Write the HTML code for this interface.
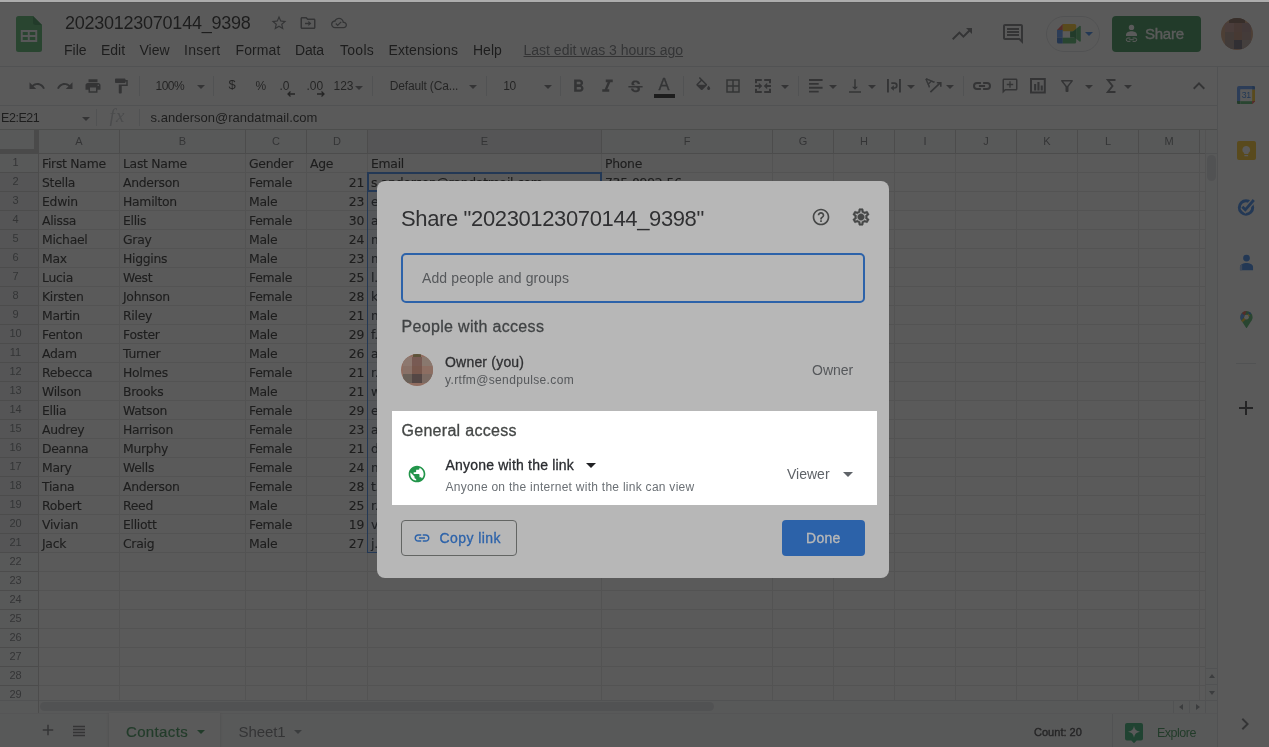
<!DOCTYPE html>
<html><head><meta charset="utf-8"><title>20230123070144_9398 - Google Sheets</title>
<style>
*{box-sizing:border-box;margin:0;padding:0}
html,body{width:1269px;height:747px;overflow:hidden;background:#fff}
body{position:relative;font-family:"Liberation Sans",sans-serif;color:#202124}
.abs{position:absolute}
svg{display:block}
/* ---------- app ---------- */
#app{position:absolute;left:0;top:0;width:1269px;height:747px}
#all{position:absolute;left:0;top:0;width:1269px;height:747px;will-change:transform}
#title{position:absolute;left:65px;top:12px;font-size:18px;line-height:22px;color:#000;letter-spacing:-0.25px;white-space:nowrap}
.menu{position:absolute;top:41px;font-size:14px;line-height:18px;color:#000;white-space:nowrap}
.ic{position:absolute;fill:#5f6368}
.hline{position:absolute;left:0;height:1px;background:#dadce0}
.tsep{position:absolute;top:76px;width:1px;height:20px;background:#dadce0}
.tt{position:absolute;top:78px;font-size:12px;line-height:16px;color:#222;white-space:nowrap}
.caret{position:absolute;width:0;height:0;border-left:4px solid transparent;border-right:4px solid transparent;border-top:4px solid #5f6368}
/* grid */
#grid{position:absolute;left:0;top:0;width:1218px;height:700px;overflow:hidden}
.ch{position:absolute;top:130px;height:23px;background:#f8f9fa;font-size:11px;line-height:23px;text-align:center;color:#5f6368}
.ch.sel{background:#e8eaed}
.rh{position:absolute;left:0;width:38px;height:18px;background:#f8f9fa;font-size:11px;line-height:16px;text-align:center;color:#5f6368;padding-right:7px}
.rh.sel{background:#e8eaed}
.vl{position:absolute;top:130px;width:1px;height:570px;background:#e1e1e1}
.hl{position:absolute;left:0;width:1205px;height:1px;background:#e1e1e1}
.c{position:absolute;height:18px;font-family:"DejaVu Sans","Liberation Sans",sans-serif;font-size:12.400px;line-height:20px;color:#000;padding:0 3px 0 3px;white-space:nowrap;overflow:hidden;letter-spacing:-0.28px;-webkit-text-stroke:.15px #000}
.c.num{text-align:right}
.c.lnk{color:#1155cc;text-decoration:underline}
/* overlays */
#scrim{position:absolute;left:0;top:0;width:1269px;height:747px;background:rgba(0,0,0,.6)}
#dlg{position:absolute;left:377px;top:181px;width:512px;height:397px;background:#fff;border-radius:8px}
#hl{position:absolute;left:392px;top:411px;width:485px;height:94px;box-shadow:0 0 0 2000px rgba(73,73,73,.396)}
#topstrip{position:absolute;left:0;top:0;width:1269px;height:2px;background:#adadad;box-shadow:0 1px 0 #555}
.d{position:absolute;white-space:nowrap}
.m{-webkit-text-stroke:.3px currentColor}
</style></head><body>
<div id="all">
<div id="app">
  <!-- header -->
  <svg class="abs" style="left:16px;top:16px" width="26" height="36" viewBox="0 0 26 36"><path d="M2.500 0H17l9 9v24.500a2.500 2.500 0 0 1-2.500 2.500h-21A2.500 2.500 0 0 1 0 33.500v-31A2.500 2.500 0 0 1 2.500 0z" fill="#34a853"/><path d="M17 0l9 9h-6.500A2.500 2.500 0 0 1 17 6.500z" fill="#188038"/><path d="M4.800 14v12h16.400V14H4.800zm7 10.100H6.700v-3.200h5.100zm0-5H6.700v-3.200h5.100zm7.500 5h-5.600v-3.200h5.600zm0-5h-5.600v-3.200h5.600z" fill="#f1f3f4"/></svg>
  <div id="title">20230123070144_9398</div>
  <svg class="ic" style="left:270px;top:14px" width="18" height="18" viewBox="0 0 24 24"><path d="M22 9.240l-7.190-.620L12 2 9.190 8.630 2 9.240l5.460 4.730L5.820 21 12 17.270 18.180 21l-1.630-7.030L22 9.240zM12 15.400l-3.760 2.270 1-4.280-3.320-2.880 4.380-.380L12 6.100l1.710 4.040 4.380.380-3.320 2.880 1 4.280L12 15.400z"/></svg>
  <svg class="ic" style="left:299px;top:14px" width="18" height="18" viewBox="0 0 24 24"><path d="M20 6h-8l-2-2H4c-1.100 0-2 .900-2 2v12c0 1.100.900 2 2 2h16c1.100 0 2-.900 2-2V8c0-1.100-.900-2-2-2zm0 12H4V6h5.170l2 2H20v10zm-7.500-2l4-3.500-4-3.500v2.500H8v2h4.500z"/></svg>
  <svg class="ic" style="left:331px;top:15px" width="16" height="16" viewBox="0 0 24 24"><path d="M19.350 10.040C18.670 6.590 15.640 4 12 4 9.110 4 6.600 5.640 5.350 8.040 2.340 8.360 0 10.910 0 14c0 3.310 2.690 6 6 6h13c2.760 0 5-2.240 5-5 0-2.640-2.050-4.780-4.650-4.960zM19 18H6c-2.210 0-4-1.790-4-4s1.790-4 4-4h.710C7.370 7.690 9.480 6 12 6c3.040 0 5.500 2.460 5.500 5.500v.500H19c1.660 0 3 1.340 3 3s-1.340 3-3 3zm-9-3.820l-2.090-2.090L6.500 13.500 10 17l6.010-6.010-1.410-1.410z"/></svg>
  <div class="menu" style="left:64px">File</div>
  <div class="menu" style="left:101px">Edit</div>
  <div class="menu" style="left:139.500px">View</div>
  <div class="menu" style="left:184px;letter-spacing:.25px">Insert</div>
  <div class="menu" style="left:235.500px;letter-spacing:.1px">Format</div>
  <div class="menu" style="left:295px;letter-spacing:-.2px">Data</div>
  <div class="menu" style="left:340px;letter-spacing:.28px">Tools</div>
  <div class="menu" style="left:388.500px;letter-spacing:.1px">Extensions</div>
  <div class="menu" style="left:473px">Help</div>
  <div class="menu" style="left:523.500px;color:#5f6368;text-decoration:underline">Last edit was 3 hours ago</div>
  <!-- header right -->
  <svg class="ic" style="left:950px;top:22px" width="24" height="24" viewBox="0 0 24 24"><path d="M16 6l2.290 2.290-4.880 4.880-4-4L2 16.590 3.410 18l6-6 4 4 6.300-6.290L22 12V6z"/></svg>
  <svg class="ic" style="left:1001px;top:22px" width="24" height="24" viewBox="0 0 24 24"><path d="M21.990 4c0-1.100-.890-2-1.990-2H4c-1.100 0-2 .900-2 2v12c0 1.100.900 2 2 2h14l4 4-.010-18zM20 4v13.170L18.830 16H4V4h16zM6 12h12v2H6zm0-3h12v2H6zm0-3h12v2H6z"/></svg>
  <div class="abs" style="left:1046px;top:16px;width:54px;height:36px;border:1px solid #dadce0;border-radius:18px"></div>
  <svg class="abs" style="left:1057px;top:24px" width="24" height="20" viewBox="0 0 24 20"><path d="M0 6L5.800 0v6z" fill="#ea4335"/><path d="M5.800 0h11.900a1.500 1.500 0 0 1 1.500 1.500v5.900H5.800z" fill="#fbbc04"/><path d="M0 6h5.800v7.400H0z" fill="#4285f4"/><path d="M0 13.400h5.800v6.100H1.500A1.500 1.500 0 0 1 0 18z" fill="#1967d2"/><path d="M5.800 13.400h13.400V18a1.500 1.500 0 0 1-1.500 1.500H5.800z" fill="#34a853"/><path d="M5.800 7.400h7.300v6H5.800z" fill="#fff"/><path d="M13.100 7.400h6.100v6h-6.100z" fill="#188038"/><path d="M13.100 9.800l6.100-5.100v10.200z" fill="#188038"/><path d="M19.200 4.700l3.300-2.700c.5-.4 1.300 0 1.300.600v14.300c0 .7-.8 1-1.300.600l-3.300-2.800z" fill="#34a853"/></svg>
  <div class="caret" style="left:1085px;top:32px;border-top-color:#1a73e8"></div>
  <div class="abs" style="left:1112px;top:16px;width:89px;height:36px;border-radius:4px;background:#188038"></div>
  <svg class="abs" style="left:1124px;top:24px" width="16" height="19" viewBox="0 0 16 19"><circle cx="7.500" cy="3.400" r="2.700" fill="#fff"/><path d="M2 12.100v-1.200C2 8.300 5.300 7.300 7.500 7.300s5.500 1 5.500 3.600v1.200z" fill="#fff"/><path d="M6.400 14H4a1.700 1.700 0 0 0 0 3.400h2.400M8.600 14H11a1.700 1.700 0 0 1 0 3.400H8.600M5.200 15.700h4.600" fill="none" stroke="#fff" stroke-width="1"/></svg>
  <div class="abs m mm" style="left:1145px;top:23.500px;font-size:15px;line-height:20px;color:#fff;letter-spacing:-.25px">Share</div>
  <div class="abs" style="left:1221px;top:18px;width:32px;height:32px;border-radius:16px;background:#c98e68;overflow:hidden"><div class="abs" style="left:8px;top:0;width:16px;height:5px;background:#6b4a3a"></div><div class="abs" style="left:4px;top:5px;width:9px;height:9px;background:#bb867e"></div><div class="abs" style="left:13px;top:5px;width:8px;height:9px;background:#ae7665"></div><div class="abs" style="left:21px;top:5px;width:9px;height:9px;background:#9e7676"></div><div class="abs" style="left:4px;top:14px;width:9px;height:8px;background:#9e7e72"></div><div class="abs" style="left:13px;top:14px;width:8px;height:8px;background:#ae765d"></div><div class="abs" style="left:21px;top:14px;width:9px;height:8px;background:#a67e76"></div><div class="abs" style="left:4px;top:22px;width:9px;height:9px;background:#967e76"></div><div class="abs" style="left:13px;top:22px;width:8px;height:9px;background:#554d5d"></div><div class="abs" style="left:21px;top:22px;width:9px;height:9px;background:#a68e86"></div></div>
  <div class="hline" style="top:66px;width:1269px"></div>
  <!-- toolbar -->
  <svg class="ic" style="left:28px;top:77px" width="18" height="18" viewBox="0 0 24 24"><path d="M12.500 8c-2.650 0-5.050.990-6.900 2.600L2 7v9h9l-3.620-3.620c1.390-1.160 3.160-1.880 5.120-1.880 3.540 0 6.550 2.310 7.600 5.500l2.370-.780C21.080 11.030 17.150 8 12.500 8z"/></svg>
  <svg class="ic" style="left:56px;top:77px" width="18" height="18" viewBox="0 0 24 24"><path d="M18.400 10.600C16.550 8.990 14.150 8 11.500 8c-4.650 0-8.580 3.030-9.960 7.220L3.900 16c1.050-3.190 4.050-5.500 7.600-5.500 1.950 0 3.730.720 5.120 1.880L13 16h9V7l-3.600 3.600z"/></svg>
  <svg class="ic" style="left:84px;top:77px" width="18" height="18" viewBox="0 0 24 24"><path d="M19 8H5c-1.660 0-3 1.340-3 3v6h4v4h12v-4h4v-6c0-1.660-1.340-3-3-3zm-3 11H8v-5h8v5zm3-7c-.550 0-1-.450-1-1s.450-1 1-1 1 .450 1 1-.450 1-1 1zm-1-9H6v4h12V3z"/></svg>
  <svg class="ic" style="left:112px;top:77px" width="18" height="18" viewBox="0 0 24 24"><path d="M18 4V3c0-.550-.450-1-1-1H5c-.550 0-1 .450-1 1v4c0 .550.450 1 1 1h12c.550 0 1-.450 1-1V6h1v4H9v11c0 .550.450 1 1 1h2c.550 0 1-.450 1-1v-9h8V4h-3z"/></svg>
  <div class="tsep" style="left:139px"></div>
  <div class="tt" style="left:155.500px;letter-spacing:-.5px">100%</div><div class="caret" style="left:197px;top:85px"></div>
  <div class="tsep" style="left:213px"></div>
  <div class="tt" style="left:228.500px;font-size:13px;top:77px">$</div>
  <div class="tt" style="left:255.500px;letter-spacing:-.5px">%</div>
  <div class="tt" style="left:279.500px">.0</div><svg class="abs" style="left:286px;top:90px" width="10" height="8" viewBox="0 0 10 8"><path d="M9 4H2M4.500 1.500L2 4l2.500 2.500" fill="none" stroke="#222" stroke-width="1.300"/></svg>
  <div class="tt" style="left:306.500px">.00</div><svg class="abs" style="left:316px;top:90px" width="10" height="8" viewBox="0 0 10 8"><path d="M1 4h7M5.500 1.500L8 4 5.500 6.500" fill="none" stroke="#222" stroke-width="1.300"/></svg>
  <div class="tt" style="left:333.500px">123</div><div class="caret" style="left:355px;top:86px"></div>
  <div class="tsep" style="left:372px"></div>
  <div class="tt" style="left:389.700px;letter-spacing:-.15px">Default (Ca...</div><div class="caret" style="left:469px;top:85px"></div>
  <div class="tsep" style="left:486px"></div>
  <div class="tt" style="left:503.300px;letter-spacing:-.4px">10</div><div class="caret" style="left:544px;top:85px"></div>
  <div class="tsep" style="left:560px"></div>
  <svg class="ic" style="left:567.800px;top:76.400px" width="21" height="21" viewBox="0 0 24 24"><path d="M15.600 10.790c.970-.670 1.650-1.770 1.650-2.790 0-2.260-1.750-4-4-4H7v14h7.040c2.090 0 3.710-1.700 3.710-3.790 0-1.520-.860-2.820-2.150-3.420zM10 6.500h3c.830 0 1.500.670 1.500 1.500s-.670 1.500-1.500 1.500h-3v-3zm3.500 9H10v-3h3.500c.830 0 1.500.670 1.500 1.500s-.670 1.500-1.500 1.500z"/></svg>
  <svg class="ic" style="left:596.600px;top:76.400px" width="21" height="21" viewBox="0 0 24 24"><path d="M10 4v3h2.210l-3.420 8H6v3h8v-3h-2.210l3.420-8H18V4z"/></svg>
  <svg class="ic" style="left:625.500px;top:77.800px" width="19" height="19" viewBox="0 0 24 24"><path d="M7.240 8.750c-.260-.480-.390-1.030-.390-1.670 0-.610.130-1.160.400-1.670.260-.500.630-.930 1.110-1.290.480-.350 1.050-.630 1.700-.830.660-.190 1.390-.290 2.180-.290.810 0 1.540.110 2.210.340.660.220 1.230.540 1.690.940.470.400.830.880 1.080 1.430.250.550.380 1.150.380 1.810h-3.010c0-.310-.050-.590-.150-.850-.090-.270-.240-.490-.440-.680-.200-.190-.450-.330-.750-.440-.300-.100-.660-.160-1.060-.160-.390 0-.740.040-1.030.13-.290.090-.530.210-.720.360-.190.160-.340.340-.440.550-.100.210-.150.430-.150.660 0 .480.250.880.740 1.210.380.250.770.480 1.410.700H7.390c-.050-.080-.110-.170-.150-.250zM21 12v-2H3v2h9.620c.180.070.400.140.550.200.370.170.660.340.870.510.210.170.350.360.430.570.070.200.110.430.110.690 0 .230-.050.450-.140.660-.090.200-.230.380-.420.530-.190.150-.420.260-.710.350-.290.080-.630.130-1.010.130-.430 0-.830-.040-1.180-.130s-.660-.230-.910-.420c-.250-.190-.450-.440-.590-.750-.140-.310-.250-.760-.250-1.210H6.400c0 .550.080 1.130.240 1.580.160.450.370.850.650 1.210.280.350.600.660.980.920.370.260.780.480 1.220.65.440.17.900.30 1.380.39.480.08.960.13 1.440.13.800 0 1.530-.09 2.180-.28s1.210-.450 1.670-.790c.460-.340.820-.770 1.070-1.270s.380-1.070.380-1.710c0-.600-.100-1.140-.310-1.610-.050-.110-.110-.230-.170-.330H21z"/></svg>
  <div class="abs" style="left:654px;top:74.500px;width:20px;text-align:center;font-size:16.500px;line-height:18px;color:#5f6368;-webkit-text-stroke:.3px #5f6368">A</div>
  <div class="abs" style="left:654px;top:94px;width:21px;height:4px;background:#000"></div>
  <div class="tsep" style="left:683px"></div>
  <svg class="ic" style="left:693.600px;top:77.300px" width="18.500" height="18.500" viewBox="0 0 24 24"><path d="M16.560 8.940L7.620 0 6.210 1.410l2.380 2.380-5.150 5.150c-.590.590-.590 1.540 0 2.120l5.500 5.500c.290.290.680.440 1.060.440s.770-.150 1.060-.440l5.500-5.500c.590-.580.590-1.530 0-2.120zM5.210 10L10 5.210 14.790 10H5.210zM19 11.500s-2 2.170-2 3.500c0 1.100.900 2 2 2s2-.900 2-2c0-1.330-2-3.500-2-3.500z"/></svg>
  <svg class="ic" style="left:724px;top:77px" width="18" height="18" viewBox="0 0 24 24"><path d="M3 3v18h18V3H3zm8 16H5v-6h6v6zm0-8H5V5h6v6zm8 8h-6v-6h6v6zm0-8h-6V5h6v6z"/></svg>
  <svg class="abs" style="left:755px;top:79px" width="16" height="14" viewBox="0 0 16 14"><path d="M1 4.300V1h5.800M9.200 1H15v3.300M1 9.700V13h5.800M9.200 13H15V9.700M0 7h4.500M16 7h-4.500" fill="none" stroke="#5f6368" stroke-width="2"/><path d="M3.800 3.800L7.300 7l-3.500 3.200zM12.200 3.800L8.700 7l3.500 3.200z" fill="#5f6368"/></svg>
  <div class="caret" style="left:781px;top:85px"></div>
  <div class="tsep" style="left:798px"></div>
  <svg class="abs" style="left:809px;top:79px" width="14" height="14" viewBox="0 0 14 14" fill="#5f6368"><path d="M0 0h13.600v1.900H0zM0 3.900h9.700v1.900H0zM0 7.800h13.600v1.900H0zM0 11.700h9.700v1.900H0z"/></svg>
  <div class="caret" style="left:829px;top:85px"></div>
  <svg class="ic" style="left:846px;top:77px" width="18" height="18" viewBox="0 0 24 24"><path d="M16 13h-3V3h-2v10H8l4 4 4-4zM4 19v2h16v-2H4z"/></svg>
  <div class="caret" style="left:868px;top:85px"></div>
  <svg class="abs" style="left:887px;top:79px" width="14" height="14" viewBox="0 0 14 14"><path d="M0 0h1.900v13.600H0zM12 0h1.900v13.600H12z" fill="#5f6368"/><path d="M4.300 4.200h3.100a2.400 2.400 0 0 1 0 4.800H6.300" fill="none" stroke="#5f6368" stroke-width="1.700"/><path d="M6.900 6.200v5.600L3.500 9z" fill="#5f6368"/></svg>
  <div class="caret" style="left:907px;top:85px"></div>
  <svg class="abs" style="left:924px;top:76px" width="19" height="19" viewBox="0 0 19 19"><text x="0" y="0" transform="translate(4.900 11.600) rotate(-45)" font-family="Liberation Sans, sans-serif" font-size="12" fill="#5f6368" stroke="#5f6368" stroke-width=".4">A</text><path d="M6.400 16.200L16.200 6.900" fill="none" stroke="#5f6368" stroke-width="1.700"/><path d="M12.800 6.700h4v4" fill="none" stroke="#5f6368" stroke-width="1.600"/></svg>
  <div class="caret" style="left:946px;top:85px"></div>
  <div class="tsep" style="left:963px"></div>
  <svg class="abs" style="left:973px;top:82px" width="18" height="8" viewBox="0 0 18 8" fill="none" stroke="#5f6368" stroke-width="2"><path d="M7.900 1H4a3 3 0 0 0 0 6h3.900M10.100 1H14a3 3 0 0 1 0 6h-3.900M5.900 4h6.200"/></svg>
  <svg class="ic" style="left:1001px;top:77px" width="18" height="18" viewBox="0 0 24 24"><path d="M20 2H4c-1.100 0-2 .900-2 2v18l4-4h14c1.100 0 2-.900 2-2V4c0-1.100-.900-2-2-2zm0 14H5.170L4 17.170V4h16v12zM11.100 5.700h1.800v3.400H16.300v1.800h-3.400v3.400h-1.800v-3.400H7.700V9.100h3.400z"/></svg>
  <svg class="abs" style="left:1030px;top:78px" width="16" height="16" viewBox="0 0 16 16"><path d="M1 1h13.800v13.600H1z" fill="none" stroke="#5f6368" stroke-width="2"/><path d="M4.100 6.100h2.100v6.400H4.100zM7.400 3.900h2.100v8.600H7.400zM10.700 7.600h2.100v4.900h-2.100z" fill="#5f6368"/></svg>
  <svg class="ic" style="left:1058px;top:77px" width="18" height="18" viewBox="0 0 24 24"><path d="M7 6h10l-5.010 6.300L7 6zm-2.750-.390C6.270 8.200 10 13 10 13v6c0 .550.450 1 1 1h2c.550 0 1-.450 1-1v-6s3.720-4.800 5.740-7.390A.998.998 0 0 0 18.950 4H5.040c-.830 0-1.300.950-.790 1.610z"/></svg>
  <div class="caret" style="left:1085px;top:85px"></div>
  <svg class="abs" style="left:1106px;top:79px" width="10" height="14" viewBox="0 0 10 14"><path d="M9.500 1H1.800L6.500 7 1.800 13h7.700" fill="none" stroke="#5f6368" stroke-width="1.900" stroke-linejoin="miter"/></svg>
  <div class="caret" style="left:1124px;top:85px"></div>
  <svg class="ic" style="left:1187px;top:74px" width="24" height="24" viewBox="0 0 24 24"><path d="M12 8l-6 6 1.410 1.410L12 10.830l4.590 4.580L18 14z"/></svg>
  <div class="hline" style="top:105px;width:1218px"></div>
  <!-- formula bar -->
  <div class="abs mm" style="left:1px;top:109.500px;font-size:12.500px;line-height:17px;color:#000;letter-spacing:-.45px">E2:E21</div>
  <div class="caret" style="left:82px;top:117px"></div>
  <div class="abs" style="left:96px;top:109px;width:1px;height:17px;background:#dadce0"></div>
  <div class="abs mm" style="left:109.500px;top:105px;font-family:'Liberation Serif',serif;font-style:italic;font-size:19px;line-height:22px;color:#bdc1c6;letter-spacing:1.200px">fx</div>
  <div class="abs" style="left:139px;top:109px;width:1px;height:17px;background:#dadce0"></div>
  <div class="abs mm" style="left:150.500px;top:109px;font-size:13px;line-height:17px;color:#000;letter-spacing:.02px">s.anderson@randatmail.com</div>
  <div class="hline" style="top:129px;width:1218px;background:#c4c7c5"></div>
  <!-- grid -->
  <div id="grid">
    <div class="abs" style="left:0;top:130px;width:1205px;height:23px;background:#f8f9fa"></div>
    <div class="abs" style="left:0;top:130px;width:38px;height:570px;background:#f8f9fa"></div>
<div class="ch" style="left:39px;width:80px">A</div>
<div class="ch" style="left:120px;width:125px">B</div>
<div class="ch" style="left:246px;width:60px">C</div>
<div class="ch" style="left:307px;width:60px">D</div>
<div class="ch sel" style="left:368px;width:233px">E</div>
<div class="ch" style="left:602px;width:170px">F</div>
<div class="ch" style="left:773px;width:60px">G</div>
<div class="ch" style="left:834px;width:60px">H</div>
<div class="ch" style="left:895px;width:60px">I</div>
<div class="ch" style="left:956px;width:60px">J</div>
<div class="ch" style="left:1017px;width:60px">K</div>
<div class="ch" style="left:1078px;width:60px">L</div>
<div class="ch" style="left:1139px;width:60px">M</div>
<div class="rh" style="top:154px">1</div>
<div class="rh sel" style="top:173px">2</div>
<div class="rh sel" style="top:192px">3</div>
<div class="rh sel" style="top:211px">4</div>
<div class="rh sel" style="top:230px">5</div>
<div class="rh sel" style="top:249px">6</div>
<div class="rh sel" style="top:268px">7</div>
<div class="rh sel" style="top:287px">8</div>
<div class="rh sel" style="top:306px">9</div>
<div class="rh sel" style="top:325px">10</div>
<div class="rh sel" style="top:344px">11</div>
<div class="rh sel" style="top:363px">12</div>
<div class="rh sel" style="top:382px">13</div>
<div class="rh sel" style="top:401px">14</div>
<div class="rh sel" style="top:420px">15</div>
<div class="rh sel" style="top:439px">16</div>
<div class="rh sel" style="top:458px">17</div>
<div class="rh sel" style="top:477px">18</div>
<div class="rh sel" style="top:496px">19</div>
<div class="rh sel" style="top:515px">20</div>
<div class="rh sel" style="top:534px">21</div>
<div class="rh" style="top:553px">22</div>
<div class="rh" style="top:572px">23</div>
<div class="rh" style="top:591px">24</div>
<div class="rh" style="top:610px">25</div>
<div class="rh" style="top:629px">26</div>
<div class="rh" style="top:648px">27</div>
<div class="rh" style="top:667px">28</div>
<div class="rh" style="top:686px">29</div>
<div class="vl" style="left:38px"></div>
<div class="vl" style="left:38px;height:23px;background:#c4c4c4"></div>
<div class="vl" style="left:119px"></div>
<div class="vl" style="left:119px;height:23px;background:#c4c4c4"></div>
<div class="vl" style="left:245px"></div>
<div class="vl" style="left:245px;height:23px;background:#c4c4c4"></div>
<div class="vl" style="left:306px"></div>
<div class="vl" style="left:306px;height:23px;background:#c4c4c4"></div>
<div class="vl" style="left:367px"></div>
<div class="vl" style="left:367px;height:23px;background:#c4c4c4"></div>
<div class="vl" style="left:601px"></div>
<div class="vl" style="left:601px;height:23px;background:#c4c4c4"></div>
<div class="vl" style="left:772px"></div>
<div class="vl" style="left:772px;height:23px;background:#c4c4c4"></div>
<div class="vl" style="left:833px"></div>
<div class="vl" style="left:833px;height:23px;background:#c4c4c4"></div>
<div class="vl" style="left:894px"></div>
<div class="vl" style="left:894px;height:23px;background:#c4c4c4"></div>
<div class="vl" style="left:955px"></div>
<div class="vl" style="left:955px;height:23px;background:#c4c4c4"></div>
<div class="vl" style="left:1016px"></div>
<div class="vl" style="left:1016px;height:23px;background:#c4c4c4"></div>
<div class="vl" style="left:1077px"></div>
<div class="vl" style="left:1077px;height:23px;background:#c4c4c4"></div>
<div class="vl" style="left:1138px"></div>
<div class="vl" style="left:1138px;height:23px;background:#c4c4c4"></div>
<div class="vl" style="left:1199px"></div>
<div class="vl" style="left:1199px;height:23px;background:#c4c4c4"></div>
<div class="vl" style="left:1205px"></div>
<div class="hl" style="top:153px"></div>
<div class="hl" style="top:153px;width:38px;background:#c4c4c4"></div>
<div class="hl" style="top:172px"></div>
<div class="hl" style="top:172px;width:38px;background:#c4c4c4"></div>
<div class="hl" style="top:191px"></div>
<div class="hl" style="top:191px;width:38px;background:#c4c4c4"></div>
<div class="hl" style="top:210px"></div>
<div class="hl" style="top:210px;width:38px;background:#c4c4c4"></div>
<div class="hl" style="top:229px"></div>
<div class="hl" style="top:229px;width:38px;background:#c4c4c4"></div>
<div class="hl" style="top:248px"></div>
<div class="hl" style="top:248px;width:38px;background:#c4c4c4"></div>
<div class="hl" style="top:267px"></div>
<div class="hl" style="top:267px;width:38px;background:#c4c4c4"></div>
<div class="hl" style="top:286px"></div>
<div class="hl" style="top:286px;width:38px;background:#c4c4c4"></div>
<div class="hl" style="top:305px"></div>
<div class="hl" style="top:305px;width:38px;background:#c4c4c4"></div>
<div class="hl" style="top:324px"></div>
<div class="hl" style="top:324px;width:38px;background:#c4c4c4"></div>
<div class="hl" style="top:343px"></div>
<div class="hl" style="top:343px;width:38px;background:#c4c4c4"></div>
<div class="hl" style="top:362px"></div>
<div class="hl" style="top:362px;width:38px;background:#c4c4c4"></div>
<div class="hl" style="top:381px"></div>
<div class="hl" style="top:381px;width:38px;background:#c4c4c4"></div>
<div class="hl" style="top:400px"></div>
<div class="hl" style="top:400px;width:38px;background:#c4c4c4"></div>
<div class="hl" style="top:419px"></div>
<div class="hl" style="top:419px;width:38px;background:#c4c4c4"></div>
<div class="hl" style="top:438px"></div>
<div class="hl" style="top:438px;width:38px;background:#c4c4c4"></div>
<div class="hl" style="top:457px"></div>
<div class="hl" style="top:457px;width:38px;background:#c4c4c4"></div>
<div class="hl" style="top:476px"></div>
<div class="hl" style="top:476px;width:38px;background:#c4c4c4"></div>
<div class="hl" style="top:495px"></div>
<div class="hl" style="top:495px;width:38px;background:#c4c4c4"></div>
<div class="hl" style="top:514px"></div>
<div class="hl" style="top:514px;width:38px;background:#c4c4c4"></div>
<div class="hl" style="top:533px"></div>
<div class="hl" style="top:533px;width:38px;background:#c4c4c4"></div>
<div class="hl" style="top:552px"></div>
<div class="hl" style="top:552px;width:38px;background:#c4c4c4"></div>
<div class="hl" style="top:571px"></div>
<div class="hl" style="top:571px;width:38px;background:#c4c4c4"></div>
<div class="hl" style="top:590px"></div>
<div class="hl" style="top:590px;width:38px;background:#c4c4c4"></div>
<div class="hl" style="top:609px"></div>
<div class="hl" style="top:609px;width:38px;background:#c4c4c4"></div>
<div class="hl" style="top:628px"></div>
<div class="hl" style="top:628px;width:38px;background:#c4c4c4"></div>
<div class="hl" style="top:647px"></div>
<div class="hl" style="top:647px;width:38px;background:#c4c4c4"></div>
<div class="hl" style="top:666px"></div>
<div class="hl" style="top:666px;width:38px;background:#c4c4c4"></div>
<div class="hl" style="top:685px"></div>
<div class="hl" style="top:685px;width:38px;background:#c4c4c4"></div>
<div class="hl" style="top:704px"></div>
<div class="hl" style="top:704px;width:38px;background:#c4c4c4"></div>
<div class="hl" style="top:153px;background:#c4c4c4"></div>
<div class="vl" style="left:38px;background:#c4c4c4"></div>
<div class="c" style="left:39px;top:154px;width:80px">First Name</div>
<div class="c" style="left:120px;top:154px;width:125px">Last Name</div>
<div class="c" style="left:246px;top:154px;width:60px">Gender</div>
<div class="c" style="left:307px;top:154px;width:60px">Age</div>
<div class="c" style="left:368px;top:154px;width:233px">Email</div>
<div class="c" style="left:602px;top:154px;width:170px">Phone</div>
<div class="c" style="left:39px;top:173px;width:80px">Stella</div>
<div class="c" style="left:120px;top:173px;width:125px">Anderson</div>
<div class="c" style="left:246px;top:173px;width:60px">Female</div>
<div class="c num" style="left:307px;top:173px;width:60px">21</div>
<div class="c" style="left:368px;top:173px;width:233px">s.anderson@randatmail.com</div>
<div class="c" style="left:602px;top:173px;width:170px">735-0992-56</div>
<div class="c" style="left:39px;top:192px;width:80px">Edwin</div>
<div class="c" style="left:120px;top:192px;width:125px">Hamilton</div>
<div class="c" style="left:246px;top:192px;width:60px">Male</div>
<div class="c num" style="left:307px;top:192px;width:60px">23</div>
<div class="c" style="left:368px;top:192px;width:233px">e.hamilton@randatmail.com</div>
<div class="c" style="left:39px;top:211px;width:80px">Alissa</div>
<div class="c" style="left:120px;top:211px;width:125px">Ellis</div>
<div class="c" style="left:246px;top:211px;width:60px">Female</div>
<div class="c num" style="left:307px;top:211px;width:60px">30</div>
<div class="c" style="left:368px;top:211px;width:233px">a.ellis@randatmail.com</div>
<div class="c" style="left:39px;top:230px;width:80px">Michael</div>
<div class="c" style="left:120px;top:230px;width:125px">Gray</div>
<div class="c" style="left:246px;top:230px;width:60px">Male</div>
<div class="c num" style="left:307px;top:230px;width:60px">24</div>
<div class="c" style="left:368px;top:230px;width:233px">m.gray@randatmail.com</div>
<div class="c" style="left:39px;top:249px;width:80px">Max</div>
<div class="c" style="left:120px;top:249px;width:125px">Higgins</div>
<div class="c" style="left:246px;top:249px;width:60px">Male</div>
<div class="c num" style="left:307px;top:249px;width:60px">23</div>
<div class="c" style="left:368px;top:249px;width:233px">m.higgins@randatmail.com</div>
<div class="c" style="left:39px;top:268px;width:80px">Lucia</div>
<div class="c" style="left:120px;top:268px;width:125px">West</div>
<div class="c" style="left:246px;top:268px;width:60px">Female</div>
<div class="c num" style="left:307px;top:268px;width:60px">25</div>
<div class="c" style="left:368px;top:268px;width:233px">l.west@randatmail.com</div>
<div class="c" style="left:39px;top:287px;width:80px">Kirsten</div>
<div class="c" style="left:120px;top:287px;width:125px">Johnson</div>
<div class="c" style="left:246px;top:287px;width:60px">Female</div>
<div class="c num" style="left:307px;top:287px;width:60px">28</div>
<div class="c" style="left:368px;top:287px;width:233px">k.johnson@randatmail.com</div>
<div class="c" style="left:39px;top:306px;width:80px">Martin</div>
<div class="c" style="left:120px;top:306px;width:125px">Riley</div>
<div class="c" style="left:246px;top:306px;width:60px">Male</div>
<div class="c num" style="left:307px;top:306px;width:60px">21</div>
<div class="c" style="left:368px;top:306px;width:233px">m.riley@randatmail.com</div>
<div class="c" style="left:39px;top:325px;width:80px">Fenton</div>
<div class="c" style="left:120px;top:325px;width:125px">Foster</div>
<div class="c" style="left:246px;top:325px;width:60px">Male</div>
<div class="c num" style="left:307px;top:325px;width:60px">29</div>
<div class="c" style="left:368px;top:325px;width:233px">f.foster@randatmail.com</div>
<div class="c" style="left:39px;top:344px;width:80px">Adam</div>
<div class="c" style="left:120px;top:344px;width:125px">Turner</div>
<div class="c" style="left:246px;top:344px;width:60px">Male</div>
<div class="c num" style="left:307px;top:344px;width:60px">26</div>
<div class="c" style="left:368px;top:344px;width:233px">a.turner@randatmail.com</div>
<div class="c" style="left:39px;top:363px;width:80px">Rebecca</div>
<div class="c" style="left:120px;top:363px;width:125px">Holmes</div>
<div class="c" style="left:246px;top:363px;width:60px">Female</div>
<div class="c num" style="left:307px;top:363px;width:60px">21</div>
<div class="c" style="left:368px;top:363px;width:233px">r.holmes@randatmail.com</div>
<div class="c" style="left:39px;top:382px;width:80px">Wilson</div>
<div class="c" style="left:120px;top:382px;width:125px">Brooks</div>
<div class="c" style="left:246px;top:382px;width:60px">Male</div>
<div class="c num" style="left:307px;top:382px;width:60px">21</div>
<div class="c" style="left:368px;top:382px;width:233px">w.brooks@randatmail.com</div>
<div class="c" style="left:39px;top:401px;width:80px">Ellia</div>
<div class="c" style="left:120px;top:401px;width:125px">Watson</div>
<div class="c" style="left:246px;top:401px;width:60px">Female</div>
<div class="c num" style="left:307px;top:401px;width:60px">29</div>
<div class="c" style="left:368px;top:401px;width:233px">e.watson@randatmail.com</div>
<div class="c" style="left:39px;top:420px;width:80px">Audrey</div>
<div class="c" style="left:120px;top:420px;width:125px">Harrison</div>
<div class="c" style="left:246px;top:420px;width:60px">Female</div>
<div class="c num" style="left:307px;top:420px;width:60px">23</div>
<div class="c" style="left:368px;top:420px;width:233px">a.harrison@randatmail.com</div>
<div class="c" style="left:39px;top:439px;width:80px">Deanna</div>
<div class="c" style="left:120px;top:439px;width:125px">Murphy</div>
<div class="c" style="left:246px;top:439px;width:60px">Female</div>
<div class="c num" style="left:307px;top:439px;width:60px">21</div>
<div class="c" style="left:368px;top:439px;width:233px">d.murphy@randatmail.com</div>
<div class="c" style="left:39px;top:458px;width:80px">Mary</div>
<div class="c" style="left:120px;top:458px;width:125px">Wells</div>
<div class="c" style="left:246px;top:458px;width:60px">Female</div>
<div class="c num" style="left:307px;top:458px;width:60px">24</div>
<div class="c" style="left:368px;top:458px;width:233px">m.wells@randatmail.com</div>
<div class="c" style="left:39px;top:477px;width:80px">Tiana</div>
<div class="c" style="left:120px;top:477px;width:125px">Anderson</div>
<div class="c" style="left:246px;top:477px;width:60px">Female</div>
<div class="c num" style="left:307px;top:477px;width:60px">28</div>
<div class="c" style="left:368px;top:477px;width:233px">t.anderson@randatmail.com</div>
<div class="c" style="left:39px;top:496px;width:80px">Robert</div>
<div class="c" style="left:120px;top:496px;width:125px">Reed</div>
<div class="c" style="left:246px;top:496px;width:60px">Male</div>
<div class="c num" style="left:307px;top:496px;width:60px">25</div>
<div class="c" style="left:368px;top:496px;width:233px">r.reed@randatmail.com</div>
<div class="c" style="left:39px;top:515px;width:80px">Vivian</div>
<div class="c" style="left:120px;top:515px;width:125px">Elliott</div>
<div class="c" style="left:246px;top:515px;width:60px">Female</div>
<div class="c num" style="left:307px;top:515px;width:60px">19</div>
<div class="c" style="left:368px;top:515px;width:233px">v.elliott@randatmail.com</div>
<div class="c" style="left:39px;top:534px;width:80px">Jack</div>
<div class="c" style="left:120px;top:534px;width:125px">Craig</div>
<div class="c" style="left:246px;top:534px;width:60px">Male</div>
<div class="c num" style="left:307px;top:534px;width:60px">27</div>
<div class="c" style="left:368px;top:534px;width:233px">j.craig@randatmail.com</div>
    <div class="abs" style="left:34px;top:130px;width:5px;height:24px;background:#bcbcbc"></div>
    <div class="abs" style="left:0;top:149px;width:39px;height:5px;background:#bcbcbc"></div>
    <!-- selection -->
    <div class="abs" style="left:368px;top:173px;width:233px;height:379px;background:rgba(26,115,232,.1)"></div>
    <div class="abs" style="left:367px;top:172px;width:235px;height:381px;border:1px solid #1a73e8"></div>
    <div class="abs" style="left:367px;top:172px;width:235px;height:20px;border:2px solid #1a73e8;background:#fff"></div>
    <div class="c" style="left:368px;top:173px;width:233px">s.anderson@randatmail.com</div>
    <!-- v scrollbar -->
    <div class="abs" style="left:1206px;top:130px;width:12px;height:570px;background:#f8f9fa"></div>
    <div class="abs" style="left:1207px;top:155px;width:9px;height:26px;border-radius:5px;background:#dadce0"></div><div class="abs" style="left:1205px;top:153px;width:13px;height:1px;background:#dadce0"></div>
    <div class="abs" style="left:1205px;top:668px;width:13px;height:1px;background:#dadce0"></div>
    <div class="abs" style="left:1205px;top:684px;width:13px;height:1px;background:#dadce0"></div>
    <div class="abs" style="left:1208.500px;top:673.500px;width:0;height:0;border-left:3px solid transparent;border-right:3px solid transparent;border-bottom:4px solid #80868b"></div>
    <div class="abs" style="left:1208.500px;top:690.500px;width:0;height:0;border-left:3px solid transparent;border-right:3px solid transparent;border-top:4px solid #80868b"></div>
  </div>
  <!-- h scrollbar -->
  <div class="abs" style="left:0;top:700px;width:1218px;height:13px;background:#f8f9fa;border-top:1px solid #dadce0"></div>
  <div class="abs" style="left:40px;top:702px;width:674px;height:9px;border-radius:5px;background:#dadce0"></div>
  <div class="abs" style="left:1173px;top:700px;width:1px;height:13px;background:#dadce0"></div><div class="abs" style="left:38px;top:700px;width:1px;height:13px;background:#c4c4c4"></div>
  <div class="abs" style="left:1189px;top:700px;width:1px;height:13px;background:#dadce0"></div>
  <div class="abs" style="left:1205px;top:700px;width:1px;height:13px;background:#dadce0"></div>
  <div class="abs" style="left:1178.500px;top:703.500px;width:0;height:0;border-top:3px solid transparent;border-bottom:3px solid transparent;border-right:4px solid #80868b"></div>
  <div class="abs" style="left:1196px;top:703.500px;width:0;height:0;border-top:3px solid transparent;border-bottom:3px solid transparent;border-left:4px solid #80868b"></div>
  <!-- bottom bar -->
  <div class="abs" style="left:0;top:713px;width:1218px;height:34px;background:#f8f9fa;border-top:1px solid #e8eaed"></div>
  <svg class="ic" style="left:38.700px;top:721px" width="18" height="18" viewBox="0 0 24 24"><path d="M19 13h-6v6h-2v-6H5v-2h6V5h2v6h6v2z"/></svg>
  <svg class="ic" style="left:69.700px;top:721.600px" width="18" height="18" viewBox="0 0 24 24"><path d="M4 15h16v-2H4v2zm0 4h16v-2H4v2zm0-8h16V9H4v2zm0-6v2h16V5H4z"/></svg>
  <div class="abs" style="left:109px;top:713px;width:111px;height:34px;background:#fff;box-shadow:0 1px 3px rgba(60,64,67,.3)"></div>
  <div class="abs m mm" style="left:126px;top:722px;font-size:15px;line-height:19px;color:#188038;letter-spacing:.35px;-webkit-text-stroke-width:.2px">Contacts</div>
  <div class="caret" style="left:197px;top:730px;border-top-color:#188038"></div>
  <div class="abs mm" style="left:238.500px;top:722px;font-size:15px;line-height:19px;color:#5f6368;letter-spacing:-.1px">Sheet1</div>
  <div class="caret" style="left:294px;top:730px;border-top-color:#80868b"></div>
  <div class="abs" style="left:1034px;top:725px;font-size:11px;line-height:14px;color:#202124;letter-spacing:.02px;-webkit-text-stroke:.4px #202124">Count: 20</div>
  <div class="abs" style="left:1112px;top:714px;width:1px;height:33px;background:#dadce0"></div>
  <svg class="abs" style="left:1125px;top:723px" width="18" height="21" viewBox="0 0 18 21"><path d="M2 0h14a2 2 0 0 1 2 2v13.500a2 2 0 0 1-2 2h-4.300L9 20.300 6.300 17.500H2a2 2 0 0 1-2-2V2a2 2 0 0 1 2-2z" fill="#0f9d58"/><path d="M9 2.800Q9.600 8.100 15 8.800Q9.600 9.500 9 14.800Q8.400 9.500 3 8.800Q8.400 8.100 9 2.800z" fill="#fff"/></svg>
  <div class="abs mm" style="left:1157px;top:725px;font-size:12.500px;line-height:16px;color:#188038;letter-spacing:-.5px">Explore</div>
  <!-- side panel -->
  <div class="abs" style="left:1217px;top:67px;width:52px;height:680px;background:#fff;border-left:1px solid #dadce0"></div>
  <div class="abs" style="left:1236px;top:363px;width:20px;height:1px;background:#dadce0"></div>
  <svg class="abs" style="left:1236.500px;top:85.500px" width="18.500" height="18.500" viewBox="0 0 19 19"><path d="M0 2a2 2 0 0 1 2-2h13.500v3.500H3.500v12H0z" fill="#4285f4"/><path d="M15.500 3.500H19v12h-3.500z" fill="#fbbc04"/><path d="M15.500 0H17a2 2 0 0 1 2 2v1.500h-3.500z" fill="#1967d2"/><path d="M0 15.500h3.500V19H2a2 2 0 0 1-2-2z" fill="#188038"/><path d="M3.500 15.500h12V19h-12z" fill="#34a853"/><path d="M15.500 15.500H19L15.500 19z" fill="#ea4335"/><path d="M3.500 3.500h12v12h-12z" fill="#fff"/><text x="9.500" y="12.700" font-family="Liberation Sans, sans-serif" font-size="9" text-anchor="middle" fill="#1a73e8" letter-spacing="-.4">31</text></svg>
  <div class="abs" style="left:1236.700px;top:141.300px;width:19px;height:19px;border-radius:2px;background:#fbbc04"></div>
  <svg class="abs" style="left:1242px;top:145.500px" width="8.500" height="11" viewBox="0 0 9 12" fill="#fff"><path d="M4.500 0a4.200 4.200 0 0 0-2.300 7.700V8.600h4.600V7.700A4.200 4.200 0 0 0 4.500 0zM2.500 9.800h4v1.400h-4z"/></svg>
  <svg class="abs" style="left:1236px;top:197px" width="20" height="24" viewBox="0 0 20 24"><circle cx="10" cy="10.500" r="6.700" fill="none" stroke="#1a73e8" stroke-width="3"/><path d="M6.300 9.800l3 3L17.800 3" fill="none" stroke="#fff" stroke-width="5.500"/><path d="M6.300 9.800l3 3L17.800 3" fill="none" stroke="#1a73e8" stroke-width="2.800"/></svg>
  <svg class="abs" style="left:1238.500px;top:254px" width="15" height="17.500" viewBox="0 0 16 18"><circle cx="8" cy="4" r="3.600" fill="#1a73e8"/><path d="M1 17v-3.500C1 10.500 5 9.300 8 9.300s7 1.200 7 4.200V17z" fill="#1a73e8"/><path d="M1 17v-3.500c0-1.500 1-2.500 2.400-3.200V17z" fill="#8ab4f8"/></svg>
  <svg class="abs" style="left:1239.500px;top:310.500px" width="13" height="17.500" viewBox="0 0 14 20"><path d="M7 0a7 7 0 0 0-7 7c0 2 .800 3.500 1.900 5L7 20l5.100-8C13.200 10.500 14 9 14 7a7 7 0 0 0-7-7z" fill="#34a853"/><path d="M7 0a7 7 0 0 0-5.400 2.500L5 5.500z" fill="#ea4335"/><path d="M1.600 2.500A7 7 0 0 0 0 7c0 1.500.400 2.700 1 3.800L5 5.500z" fill="#4285f4"/><path d="M9.500 1a7 7 0 0 1 2.900 1.500L9 6z" fill="#1a73e8"/><path d="M1 10.800L9.200 3 11 5 2.500 12.800z" fill="#fbbc04"/><circle cx="7" cy="7" r="2.600" fill="#fff"/></svg>
  <svg class="ic" style="left:1234px;top:396px;fill:#202124" width="24" height="24" viewBox="0 0 24 24"><path d="M19 13h-6v6h-2v-6H5v-2h6V5h2v6h6v2z"/></svg>
  <svg class="ic" style="left:1233px;top:712px" width="24" height="24" viewBox="0 0 24 24"><path d="M10 6L8.590 7.410 13.170 12l-4.580 4.590L10 18l6-6z"/></svg>
</div>
<div id="scrim"></div>
<!-- dialog -->
<div id="dlg"></div>
<div class="d" style="left:401px;top:205px;font-size:22px;line-height:28px;color:#202124;letter-spacing:-.37px">Share "20230123070144_9398"</div>
<svg class="ic" style="left:811px;top:207px;fill:#444746" width="20" height="20" viewBox="0 0 24 24"><path d="M11 18h2v-2h-2v2zm1-16C6.480 2 2 6.480 2 12s4.480 10 10 10 10-4.480 10-10S17.520 2 12 2zm0 18c-4.410 0-8-3.590-8-8s3.590-8 8-8 8 3.590 8 8-3.590 8-8 8zm0-14c-2.210 0-4 1.790-4 4h2c0-1.100.900-2 2-2s2 .900 2 2c0 2-3 1.750-3 5h2c0-2.250 3-2.500 3-5 0-2.210-1.790-4-4-4z"/></svg>
<svg class="ic" style="left:851px;top:207px;fill:#444746;stroke:#444746;stroke-width:.6px" width="20" height="20" viewBox="0 0 24 24"><path d="M19.430 12.980c.04-.320.07-.640.07-.980 0-.340-.03-.660-.07-.980l2.110-1.650c.19-.150.240-.420.120-.640l-2-3.460c-.09-.160-.26-.250-.44-.250-.06 0-.12.010-.17.030l-2.490 1c-.52-.400-1.080-.730-1.690-.980l-.38-2.650C14.460 2.180 14.250 2 14 2h-4c-.25 0-.46.180-.49.420l-.38 2.650c-.61.250-1.170.59-1.690.98l-2.490-1c-.06-.02-.12-.03-.18-.03-.17 0-.34.09-.43.250l-2 3.460c-.13.220-.07.490.12.640l2.110 1.650c-.04.320-.07.650-.07.980 0 .33.03.66.07.98l-2.110 1.650c-.19.150-.24.420-.12.640l2 3.460c.09.160.26.250.44.250.06 0 .12-.01.170-.03l2.490-1c.52.400 1.080.73 1.690.98l.38 2.650c.03.240.24.420.49.420h4c.25 0 .46-.18.490-.42l.38-2.650c.61-.25 1.170-.59 1.690-.98l2.490 1c.06.02.12.03.18.03.17 0 .34-.09.43-.25l2-3.460c.12-.22.07-.49-.12-.64l-2.110-1.650zm-1.980-1.710c.04.310.05.520.05.730 0 .21-.02.430-.05.730l-.14 1.130.89.700 1.080.84-.7 1.210-1.270-.51-1.040-.42-.9.680c-.43.320-.84.560-1.250.73l-1.060.43-.16 1.130-.2 1.350h-1.400l-.19-1.350-.16-1.130-1.060-.43c-.43-.18-.83-.41-1.230-.71l-.91-.7-1.060.43-1.270.51-.7-1.210 1.080-.84.890-.7-.14-1.130c-.03-.31-.05-.54-.05-.74s.02-.43.050-.73l.14-1.130-.89-.7-1.080-.84.700-1.210 1.270.51 1.040.42.900-.68c.43-.32.840-.56 1.250-.73l1.060-.43.160-1.130.2-1.350h1.390l.19 1.350.16 1.130 1.060.43c.43.180.83.410 1.230.71l.91.700 1.060-.43 1.270-.51.700 1.210-1.070.85-.89.700.14 1.130zM12 8c-2.210 0-4 1.790-4 4s1.790 4 4 4 4-1.790 4-4-1.790-4-4-4zm0 6c-1.100 0-2-.900-2-2s.900-2 2-2 2 .900 2 2-.900 2-2 2z"/><circle cx="12" cy="12" r="3.400" stroke="none"/></svg>
<div class="abs" style="left:401px;top:253px;width:464px;height:50px;border:2px solid #1a73e8;border-radius:5px"></div>
<div class="d" style="left:422px;top:268px;font-size:14px;line-height:20px;color:#5f6368;letter-spacing:.11px">Add people and groups</div>
<div class="d m" style="left:401.500px;top:315.500px;font-size:16px;line-height:22px;color:#3c4043;letter-spacing:.32px">People with access</div>
<div class="abs" style="left:401px;top:354px;width:32px;height:32px;border-radius:16px;background:#c08570;overflow:hidden"><div class="abs" style="left:12px;top:0;width:8px;height:4px;background:#6b5a30"></div><div class="abs" style="left:2px;top:3px;width:9px;height:9px;background:#b99788"></div><div class="abs" style="left:11px;top:3px;width:10px;height:9px;background:#97655a"></div><div class="abs" style="left:21px;top:3px;width:11px;height:9px;background:#b49787"></div><div class="abs" style="left:2px;top:12px;width:9px;height:8px;background:#b48c7b"></div><div class="abs" style="left:11px;top:12px;width:10px;height:8px;background:#976350"></div><div class="abs" style="left:21px;top:12px;width:11px;height:8px;background:#b98773"></div><div class="abs" style="left:2px;top:20px;width:9px;height:9px;background:#807063"></div><div class="abs" style="left:11px;top:20px;width:10px;height:9px;background:#5b4643"></div><div class="abs" style="left:21px;top:20px;width:11px;height:9px;background:#9c8073"></div></div>
<div class="d m" style="left:445px;top:352px;font-size:14px;line-height:20px;color:#202124;letter-spacing:.2px">Owner (you)</div>
<div class="d" style="left:445px;top:372px;font-size:12px;line-height:16px;color:#5f6368;letter-spacing:.35px">y.rtfm@sendpulse.com</div>
<div class="d" style="left:812px;top:360px;font-size:14px;line-height:20px;color:#5f6368">Owner</div>
<div class="d m" style="left:401.500px;top:420px;font-size:16px;line-height:22px;color:#444746;letter-spacing:.29px">General access</div>
<svg class="abs" style="left:407px;top:464px" width="20" height="20" viewBox="0 0 24 24" fill="#22954a"><path d="M12 2C6.480 2 2 6.480 2 12s4.480 10 10 10 10-4.480 10-10S17.520 2 12 2zm-1 17.930c-3.950-.490-7-3.850-7-7.930 0-.620.08-1.210.21-1.790L9 15v1c0 1.100.900 2 2 2v1.930zm6.900-2.540c-.26-.810-1-1.390-1.900-1.390h-1v-3c0-.550-.45-1-1-1H8v-2h2c.550 0 1-.450 1-1V7h2c1.100 0 2-.900 2-2v-.410c2.930 1.190 5 4.060 5 7.410 0 2.080-.8 3.970-2.100 5.390z"/></svg>
<div class="d m" style="left:445.500px;top:455px;font-size:14px;line-height:20px;color:#2a2c30;letter-spacing:.2px">Anyone with the link</div>
<div class="caret" style="left:586px;top:463px;border-left-width:5px;border-right-width:5px;border-top:5px solid #202124"></div>
<div class="d" style="left:445.500px;top:479px;font-size:12px;line-height:16px;color:#6b7075;letter-spacing:.27px">Anyone on the internet with the link can view</div>
<div class="d" style="left:787px;top:464px;font-size:14px;line-height:20px;color:#5f6368">Viewer</div>
<div class="caret" style="left:843px;top:472px;border-left-width:5px;border-right-width:5px;border-top:5px solid #5f6368"></div>
<div class="abs" style="left:401px;top:520px;width:116px;height:36px;border:1px solid #747775;border-radius:4px"></div>
<svg class="abs" style="left:413px;top:529px" width="18" height="18" viewBox="0 0 24 24" fill="#1a73e8"><path d="M3.900 12c0-1.710 1.390-3.100 3.100-3.100h4V7H7c-2.760 0-5 2.240-5 5s2.240 5 5 5h4v-1.900H7c-1.710 0-3.100-1.390-3.100-3.100zM8 13h8v-2H8v2zm9-6h-4v1.900h4c1.710 0 3.100 1.390 3.100 3.100s-1.390 3.100-3.100 3.100h-4V17h4c2.760 0 5-2.240 5-5s-2.240-5-5-5z"/></svg>
<div class="d m" style="left:439.500px;top:528px;font-size:14px;line-height:20px;color:#1a73e8;letter-spacing:.43px">Copy link</div>
<div class="abs" style="left:782px;top:520px;width:83px;height:36px;border-radius:4px;background:#1a73e8"></div>
<div class="d m" style="left:806px;top:528px;font-size:14px;line-height:20px;color:#fff;letter-spacing:.3px">Done</div>
<div id="hl"></div>
<div id="topstrip"></div>
</div>
</body></html>
